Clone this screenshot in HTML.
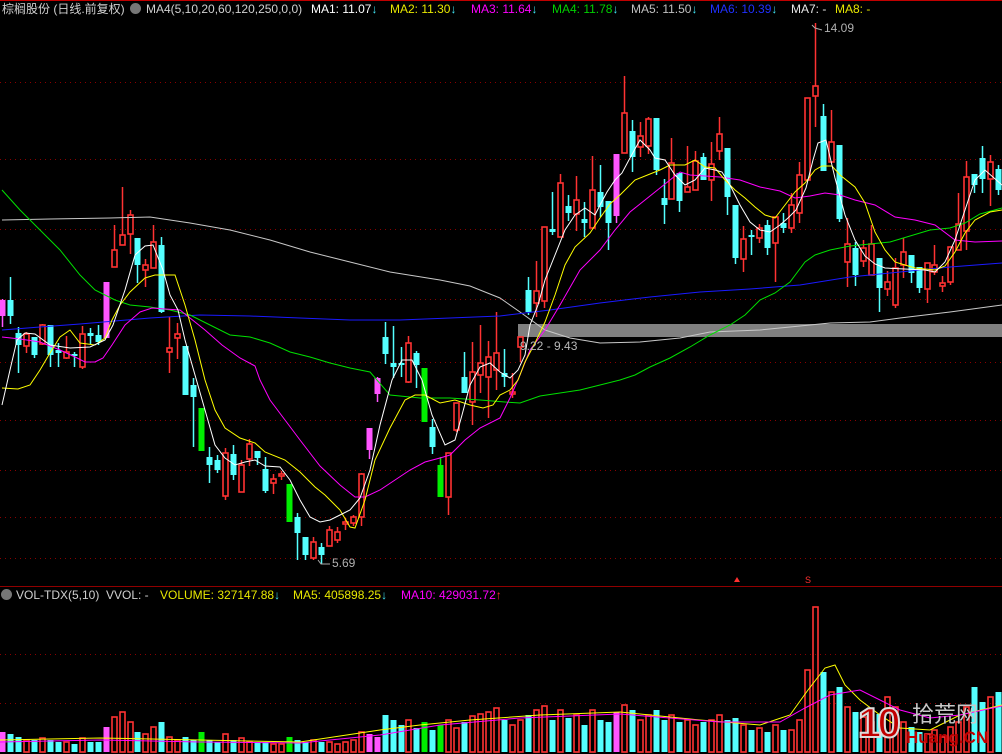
<!DOCTYPE html>
<html><head><meta charset="utf-8"><style>
html,body{margin:0;padding:0;background:#000;width:1002px;height:754px;overflow:hidden}
svg{position:absolute;left:0;top:0}
.t{position:absolute;font-family:"Liberation Sans","Noto Sans CJK SC",sans-serif;font-size:12px;white-space:nowrap;line-height:15px}
.ar{color:#40e0f0}
</style></head><body>
<svg id="s" width="1002" height="754" xmlns="http://www.w3.org/2000/svg"></svg>
<div class="t" style="left:2px;top:2px;color:#d0d0d0">棕榈股份 (日线.前复权)</div>
<div class="t" style="left:130px;top:3px;width:11px;height:11px;border-radius:6px;background:#777;"></div>
<div class="t" style="left:146px;top:2px;color:#d0d0d0">MA4(5,10,20,60,120,250,0,0)</div>
<div class="t" style="left:311px;top:2px;color:#fff">MA1: 11.07<span class="ar">↓</span></div>
<div class="t" style="left:390px;top:2px;color:#e8e800">MA2: 11.30<span class="ar">↓</span></div>
<div class="t" style="left:471px;top:2px;color:#ff00ff">MA3: 11.64<span class="ar">↓</span></div>
<div class="t" style="left:552px;top:2px;color:#00d000">MA4: 11.78<span class="ar">↓</span></div>
<div class="t" style="left:631px;top:2px;color:#c0c0c0">MA5: 11.50<span class="ar">↓</span></div>
<div class="t" style="left:710px;top:2px;color:#2030ff">MA6: 10.39<span class="ar">↓</span></div>
<div class="t" style="left:791px;top:2px;color:#e8e8e8">MA7: -</div>
<div class="t" style="left:835px;top:2px;color:#e8e800">MA8: -</div>
<div class="t" style="left:824px;top:21px;color:#b0b0b0">14.09</div>
<div class="t" style="left:332px;top:556px;color:#b0b0b0">5.69</div>
<div class="t" style="left:520px;top:339px;color:#b8b8b8">9.22 - 9.43</div>
<div class="t" style="left:1px;top:589px;width:11px;height:11px;border-radius:6px;background:#777;"></div>
<div class="t" style="left:16px;top:588px;color:#d0d0d0">VOL-TDX(5,10)</div>
<div class="t" style="left:106px;top:588px;color:#d0d0d0">VVOL: -</div>
<div class="t" style="left:160px;top:588px;color:#e8e800">VOLUME: 327147.88<span class="ar">↓</span></div>
<div class="t" style="left:293px;top:588px;color:#e8e800">MA5: 405898.25<span class="ar">↓</span></div>
<div class="t" style="left:401px;top:588px;color:#ff00ff">MA10: 429031.72<span style="color:#ff3030">↑</span></div>
<div class="t" style="left:858px;top:700px;font-size:42px;line-height:46px;font-weight:bold;color:#c00000;-webkit-text-stroke:2px #ddd;letter-spacing:-4px">10</div>
<div class="t" style="left:912px;top:702px;font-size:22px;line-height:26px;color:#c8c8c8">拾荒网</div>
<div class="t" style="left:906px;top:728px;font-size:17px;line-height:20px;color:#c00000;font-weight:bold">Huang.CN</div>
<script>
const S=document.getElementById('s');let h='';
h+='<line x1="0" y1="0.5" x2="1002" y2="0.5" stroke="#c00000"/>';
h+='<line x1="0" y1="586.5" x2="1002" y2="586.5" stroke="#900000"/>';
[82,159,229,299,362,420,470,517,558,654,703].forEach(y=>h+=`<line x1="0" y1="${y}.5" x2="1002" y2="${y}.5" stroke="#8a0000" stroke-dasharray="1 4"/>`);
h+='<rect x="518" y="324" width="484" height="13" fill="#808080"/>';
const C=[['p',300,316,299,327],['c',300,316,277,324],['c',333,345,327,373],['r',334,346,332,353],['c',337,355,337,358],['r',325,344,324,345],['c',325,355,325,367],['c',350,353,343,367],['r',352,358,336,359],['c',354,356,352,367],['r',334,367,326,369],['c',333,336,328,344],['c',335,342,325,345],['p',282,338,282,338],['r',250,267,225,267],['r',235,245,187,245],['r',215,234,210,254],['c',238,265,238,283],['r',265,270,259,287],['r',242,268,225,268],['c',245,312,237,313],['r',348,352,317,373],['r',334,338,323,359],['c',346,395,346,395],['c',385,397,378,447],['g',408,451,408,451],['c',457,465,447,483],['c',460,470,455,473],['r',453,496,448,500],['c',454,475,445,480],['r',465,492,460,492],['r',444,459,439,466],['c',451,458,451,465],['c',469,491,457,493],['r',479,483,474,494],['r',474,476,471,480],['g',484,522,484,522],['c',517,533,513,560],['c',537,555,537,560],['r',542,558,537,560],['c',547,555,543,564],['r',530,546,526,546],['r',532,540,527,543],['r',522,524,518,530],['r',517,523,515,526],['r',474,517,473,526],['p',428,450,428,459],['p',378,394,377,402],['c',337,354,322,364],['c',363,367,326,378],['c',363,365,347,377],['r',343,382,336,383],['c',353,365,351,388],['g',368,422,368,422],['c',427,447,419,454],['g',465,497,457,497],['r',453,497,453,515],['r',403,430,403,432],['c',377,393,352,393],['r',372,402,342,425],['r',363,375,325,393],['r',357,377,341,418],['r',353,370,312,390],['c',373,377,349,387],['r',392,394,373,398],['r',337,347,337,362],['c',290,312,277,315],['r',291,303,261,317],['r',227,301,227,308],['c',229,232,192,235],['r',183,237,174,237],['c',206,213,195,221],['r',200,214,176,231],['c',219,223,202,237],['r',190,228,156,228],['c',192,207,165,217],['c',201,223,201,250],['p',154,216,154,223],['r',113,153,76,153],['c',131,157,120,172],['r',136,147,122,157],['r',119,146,117,154],['c',118,170,118,175],['c',198,205,179,224],['r',163,199,138,199],['c',173,201,173,212],['r',187,192,146,192],['r',161,190,151,190],['c',157,180,153,180],['r',164,180,142,201],['r',134,151,117,160],['c',148,197,148,215],['c',205,258,205,264],['r',239,259,226,272],['c',235,237,230,255],['r',228,238,224,243],['c',225,248,220,255],['r',217,243,217,282],['c',223,228,213,233],['r',205,228,193,233],['r',175,213,162,223],['r',98,180,98,180],['r',86,96,23,127],['c',116,171,104,171],['r',142,162,110,162],['c',145,219,145,222],['r',244,262,218,287],['c',248,275,242,286],['r',248,261,240,267],['r',244,275,225,275],['c',258,288,258,312],['r',282,289,271,296],['r',268,305,258,308],['r',252,265,238,278],['c',255,273,255,283],['c',267,288,267,293],['r',263,289,263,303],['r',265,272,245,275],['r',283,286,276,292],['r',247,282,247,285],['r',224,250,193,250],['r',177,231,161,250],['c',174,185,174,193],['c',158,179,146,193],['r',162,179,155,206],['c',169,190,165,195],['c',167,246,160,246]];
const V=[20,18,15,12,12,14,12,10,10,8,14,10,10,25,35,40,30,20,18,25,30,15,12,15,12,20,12,10,18,12,14,10,10,10,8,8,15,12,10,12,10,10,8,10,12,20,18,15,37,32,27,32,24,30,22,27,32,24,30,36,38,40,44,32,27,32,37,42,46,32,42,34,37,27,42,32,30,40,47,42,32,37,42,32,37,30,32,27,30,32,37,32,34,27,22,24,20,27,22,22,32,82,145,80,60,65,45,40,35,30,38,55,45,30,25,20,18,22,15,25,30,45,65,50,55,60,45,60];
const col={r:'#ff3232',c:'#54ffff',p:'#ff55ff',g:'#00ee00'};
C.forEach((k,i)=>{const x=Math.round(2+7.97*i);const c=col[k[0]];
 h+=`<line x1="${x+.5}" y1="${k[3]}" x2="${x+.5}" y2="${k[4]}" stroke="${c}" stroke-width="1.5"/>`;
 let bh=Math.max(k[2]-k[1],2);
 if(k[0]=='r')h+=`<rect x="${x-2}" y="${k[1]}" width="5" height="${bh}" fill="#000" stroke="${c}" stroke-width="1.6"/>`;
 else h+=`<rect x="${x-2.5}" y="${k[1]}" width="6" height="${bh}" fill="${c}"/>`;
 const v=V[i]||15;
 if(k[0]=='r')h+=`<rect x="${x-2}" y="${752-v}" width="5" height="${v}" fill="none" stroke="${c}" stroke-width="1.6"/>`;
 else h+=`<rect x="${x-2.5}" y="${752-v}" width="6" height="${v}" fill="${c}"/>`;
});
function pl(p,c){h+=`<polyline fill="none" stroke="${c}" stroke-width="1" points="${p.map(a=>a.join(',')).join(' ')}"/>`}
pl([[2,220],[50,219],[110,218],[150,217],[170,220],[190,223],[230,230],[270,240],[310,252],[350,262],[390,272],[440,280],[470,286],[500,298],[520,312],[545,330],[570,338],[600,343],[640,342],[680,338],[710,332],[760,330],[790,327],[830,323],[870,322],[900,318],[950,312],[1002,305]],'#c8c8c8');
pl([[2,330],[40,327],[80,324],[150,318],[200,315],[250,316],[300,318],[350,320],[400,320],[450,318],[500,316],[550,310],[600,303],[650,297],[700,292],[750,289],[800,285],[850,277],[900,272],[950,267],[1002,263]],'#1a1aff');
pl([[2,190],[20,210],[40,230],[60,250],[80,275],[95,290],[105,295],[115,300],[130,305],[150,307],[170,310],[190,315],[210,325],[230,335],[250,337],[270,343],[290,352],[310,357],[330,363],[350,368],[370,372],[390,395],[420,398],[450,398],[480,400],[505,402],[520,403],[540,396],[560,393],[580,390],[600,385],[620,380],[635,375],[650,367],[670,358],[690,347],[710,335],[730,325],[745,315],[760,300],[775,293],[790,282],[805,262],[815,255],[830,250],[850,246],[870,244],[890,242],[910,236],[930,230],[950,228],[965,223],[980,214],[1002,208]],'#00e000');
pl([[2,337],[20,339],[40,342],[60,350],[75,357],[85,362],[95,362],[103,358],[112,345],[125,325],[140,312],[152,308],[165,309],[180,310],[190,318],[205,330],[222,345],[240,358],[255,366],[260,380],[270,400],[285,420],[300,440],[320,466],[340,485],[355,497],[365,497],[380,490],[395,480],[410,470],[425,462],[440,458],[450,455],[465,440],[480,428],[500,418],[510,398],[520,375],[530,350],[545,330],[560,305],[580,270],[600,250],[615,230],[630,212],[645,200],[660,188],[670,180],[680,172],[690,175],[705,176],[720,177],[740,180],[760,187],[780,191],[795,198],[810,196],[825,193],[840,195],[855,200],[875,205],[895,217],[915,220],[935,225],[955,240],[975,242],[1002,241]],'#ff00ff');
pl([[2,388],[18,389],[30,385],[40,370],[50,353],[60,337],[70,330],[80,343],[95,345],[105,338],[112,320],[120,305],[130,292],[145,278],[155,275],[175,275],[185,305],[195,340],[205,380],[215,410],[225,428],[240,438],[255,443],[265,452],[285,460],[300,472],[315,487],[325,495],[340,510],[350,527],[355,528],[365,500],[375,460],[390,428],[405,400],[415,395],[425,395],[440,403],[455,400],[470,405],[483,408],[493,405],[500,395],[510,390],[518,380],[525,362],[535,343],[545,322],[555,295],[565,265],[575,247],[590,233],[600,218],[610,204],[620,195],[635,180],[650,174],[660,170],[670,165],[685,165],[695,160],[705,167],[715,168],[725,180],[735,190],[745,198],[755,207],[765,215],[775,218],[785,205],[795,192],[805,183],[815,170],[822,166],[832,166],[840,175],[855,187],[865,203],[875,232],[885,250],[895,262],[905,265],[915,268],[935,270],[945,266],[955,252],[965,233],[975,220],[990,212],[1002,210]],'#ffff00');
pl([[2,405],[10,370],[17,340],[25,333],[35,334],[50,345],[70,348],[90,347],[105,340],[113,325],[125,290],[135,255],[145,246],[153,245],[163,270],[170,295],[178,310],[185,340],[195,375],[205,410],[215,445],[225,458],[235,465],[245,462],[255,460],[265,466],[280,467],[290,480],[300,500],[310,517],[320,522],[330,520],[340,515],[350,510],[360,498],[370,470],[380,425],[392,380],[402,360],[412,360],[422,380],[432,415],[445,445],[455,440],[462,415],[470,385],[480,367],[490,363],[500,372],[510,378],[518,370],[525,355],[530,325],[538,305],[545,280],[555,255],[565,230],[575,215],[585,208],[595,215],[600,205],[607,192],[615,180],[622,173],[630,158],[640,140],[650,150],[655,158],[665,160],[675,175],[685,185],[695,180],[705,168],[715,170],[722,172],[730,185],[740,205],[750,222],[760,230],[770,232],[780,225],[788,218],[796,210],[806,188],[813,160],[818,143],[826,140],[835,178],[845,215],[855,240],[865,256],[875,264],[885,268],[925,270],[935,272],[945,262],[955,240],[965,210],[975,180],[985,170],[1002,185]],'#ffffff');
pl([[0,740],[100,738],[200,740],[300,742],[380,730],[420,725],[470,720],[540,715],[620,712],[700,720],[760,725],[790,715],[808,690],[825,668],[835,665],[845,685],[860,700],[880,715],[900,728],[930,730],[960,715],[1002,705]],'#ffff00');
pl([[0,742],[100,740],[200,742],[300,743],[380,735],[440,725],[520,718],[620,714],[720,722],[780,722],[805,708],[830,695],[860,690],[880,700],[900,710],[930,718],[960,715],[1002,706]],'#ff00ff');
h+='<polyline points="812,25 815,28 822,30" fill="none" stroke="#aaa"/><polyline points="318,560 321,564 330,564" fill="none" stroke="#aaa"/>';
h+='<path d="M734,582 L737,577 L740,582Z" fill="#ff3030"/><text x="805" y="583" fill="#ff3030" font-size="9" font-family="Liberation Sans">S</text>';
S.innerHTML=h;
</script>
</body></html>
